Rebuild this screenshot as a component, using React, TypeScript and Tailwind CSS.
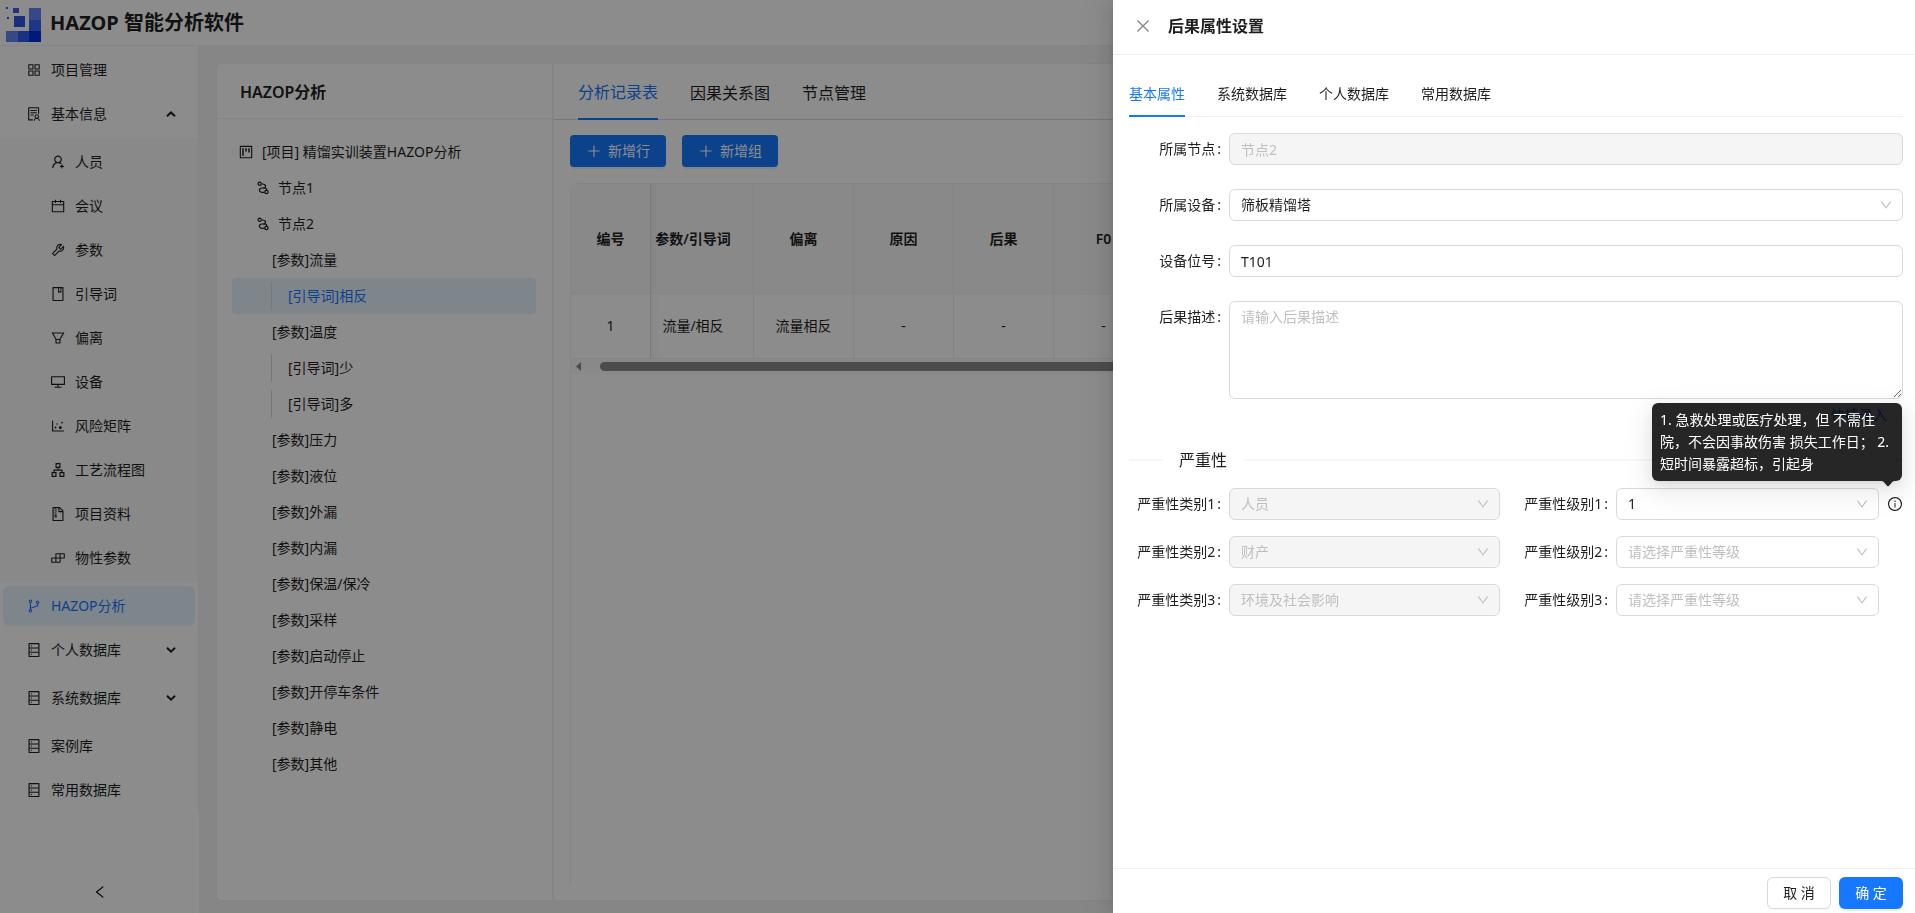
import { useId } from "react";
import type { ReactNode } from "react";
import type { IconType } from "react-icons";
import {
  AiOutlineApartment,
  AiOutlineAppstore,
  AiOutlineBook,
  AiOutlineBranches,
  AiOutlineBuild,
  AiOutlineCalendar,
  AiOutlineClose,
  AiOutlineDatabase,
  AiOutlineDesktop,
  AiOutlineDotChart,
  AiOutlineDown,
  AiOutlineFileZip,
  AiOutlineFilter,
  AiOutlineInfoCircle,
  AiOutlineLeft,
  AiOutlinePlus,
  AiOutlineProject,
  AiOutlineSolution,
  AiOutlineTool,
  AiOutlineUserAdd,
} from "react-icons/ai";

function Logo() {
  return (
    <svg width="36" height="36" viewBox="0 0 36 36" aria-hidden="true">
      <rect x="0" y="0" width="2" height="2" fill="#3b5bdb" />
      <rect x="7" y="1" width="6" height="5" fill="#3a5be0" />
      <rect x="1" y="10" width="2" height="2" fill="#3b5bdb" />
      <rect x="8" y="9" width="11" height="11" fill="#2f55e6" />
      <rect x="23" y="1" width="12" height="12" fill="#6684f5" />
      <rect x="23" y="13" width="12" height="11" fill="#3a62f5" />
      <rect x="0" y="24" width="12" height="11" fill="#6684f5" />
      <rect x="12" y="24" width="11" height="11" fill="#2f5af0" />
      <rect x="23" y="24" width="12" height="11" fill="#0030d8" />
    </svg>
  );
}

function NodeIcon() {
  return (
    <svg width="13" height="14" viewBox="0 0 13 14" fill="none" stroke="currentColor" strokeWidth="1.2" aria-hidden="true">
      <circle cx="2.6" cy="2.800" r="1.6" />
      <path d="M4.300 3h1.300c1.700 0 2.900.9 2.900 2.200S7.500 7 6.200 7H4.600a2.100 2.100 0 0 0 0 4.300h3" />
      <path d="M6.200 7h1.600c1.300 0 2 .9 2 2.200" />
      <circle cx="9.400" cy="11" r="1.700" />
    </svg>
  );
}

function Arrow({ up = false }: { up?: boolean }) {
  return (
    <svg width="10" height="6" viewBox="0 0 10 6" fill="none" stroke="currentColor" strokeWidth="2" aria-hidden="true">
      <path d={up ? "M1 5.2 5 1.4 9 5.2" : "M1 .8 5 4.6 9 .8"} />
    </svg>
  );
}

type MenuRowProps = {
  icon: IconType;
  label: string;
  sub?: boolean;
  active?: boolean;
  arrow?: "up" | "down";
  space?: string;
};

function MenuRow({ icon: Icon, label, sub, active, arrow, space = "pb-1" }: MenuRowProps) {
  return (
    <li className={space}>
      <button
        type="button"
        className={`mx-[3px] flex h-10 w-[calc(100%-6px)] items-center gap-[9px] rounded-md pr-[19px] text-left ${
          sub ? "pl-[47px]" : "pl-[23px]"
        } ${active ? "bg-[#e6f4ff] text-[#1677ff]" : ""}`}
      >
        <Icon size={16} />
        <span className="flex-1">{label}</span>
        {arrow && <Arrow up={arrow === "up"} />}
      </button>
    </li>
  );
}

const basicItems: { icon: IconType; label: string }[] = [
  { icon: AiOutlineUserAdd, label: "人员" },
  { icon: AiOutlineCalendar, label: "会议" },
  { icon: AiOutlineTool, label: "参数" },
  { icon: AiOutlineBook, label: "引导词" },
  { icon: AiOutlineFilter, label: "偏离" },
  { icon: AiOutlineDesktop, label: "设备" },
  { icon: AiOutlineDotChart, label: "风险矩阵" },
  { icon: AiOutlineApartment, label: "工艺流程图" },
  { icon: AiOutlineFileZip, label: "项目资料" },
  { icon: AiOutlineBuild, label: "物性参数" },
];

function Sidebar() {
  return (
    <aside className="flex w-[199px] shrink-0 flex-col bg-white">
      <nav className="border-r border-[#f0f0f0]">
        <ul className="pt-1">
          <MenuRow icon={AiOutlineAppstore} label="项目管理" />
          <MenuRow icon={AiOutlineSolution} label="基本信息" arrow="up" />
          <li className="mb-1 bg-[#fafafa] pt-1">
            <ul>
              {basicItems.map((item) => (
                <MenuRow key={item.label} icon={item.icon} label={item.label} sub />
              ))}
            </ul>
          </li>
          <MenuRow icon={AiOutlineBranches} label="HAZOP分析" active />
          <MenuRow icon={AiOutlineDatabase} label="个人数据库" arrow="down" space="pb-2" />
          <MenuRow icon={AiOutlineDatabase} label="系统数据库" arrow="down" space="pb-2" />
          <MenuRow icon={AiOutlineDatabase} label="案例库" />
          <MenuRow icon={AiOutlineDatabase} label="常用数据库" />
        </ul>
      </nav>
      <button type="button" aria-label="收起菜单" className="mt-auto flex h-[42px] items-center justify-center">
        <AiOutlineLeft size={16} />
      </button>
    </aside>
  );
}

type TreeRow = { kind: "project" | "node" | "param" | "word"; label: string; active?: boolean };

const treeRows: TreeRow[] = [
  { kind: "project", label: "[项目] 精馏实训装置HAZOP分析" },
  { kind: "node", label: "节点1" },
  { kind: "node", label: "节点2" },
  { kind: "param", label: "[参数]流量" },
  { kind: "word", label: "[引导词]相反", active: true },
  { kind: "param", label: "[参数]温度" },
  { kind: "word", label: "[引导词]少" },
  { kind: "word", label: "[引导词]多" },
  { kind: "param", label: "[参数]压力" },
  { kind: "param", label: "[参数]液位" },
  { kind: "param", label: "[参数]外漏" },
  { kind: "param", label: "[参数]内漏" },
  { kind: "param", label: "[参数]保温/保冷" },
  { kind: "param", label: "[参数]采样" },
  { kind: "param", label: "[参数]启动停止" },
  { kind: "param", label: "[参数]开停车条件" },
  { kind: "param", label: "[参数]静电" },
  { kind: "param", label: "[参数]其他" },
];

const indent = { project: "pl-1.5", node: "pl-[25px]", param: "pl-10", word: "pl-[39px]" };

function TreePanel() {
  return (
    <section className="w-[337px] shrink-0 rounded-l-md border border-[#f0f0f0] bg-white">
      <h2 className="flex h-[55px] items-center border-b border-[#f0f0f0] px-[23px] pb-1.5 pt-2 text-base font-semibold">
        HAZOP分析
      </h2>
      <ul className="pl-[15px] pr-4 pt-[15px]">
        {treeRows.map((row) => (
          <li key={row.label}>
            <button
              type="button"
              className={`flex h-9 w-full items-center gap-2 rounded text-left ${indent[row.kind]} ${
                row.active ? "bg-[#e6f4ff] text-[#1677ff]" : ""
              }`}
            >
              {row.kind === "project" && <AiOutlineProject size={16} />}
              {row.kind === "node" && <NodeIcon />}
              {row.kind === "word" ? (
                <span className="flex h-7 items-center border-l border-[#d9d9d9] pl-4">{row.label}</span>
              ) : (
                <span>{row.label}</span>
              )}
            </button>
          </li>
        ))}
      </ul>
    </section>
  );
}

const columns = [
  { title: "编号", value: "1", width: "w-[81px]" },
  { title: "参数/引导词", value: "流量/相反", width: "w-[103px]" },
  { title: "偏离", value: "流量相反", width: "w-[100px]" },
  { title: "原因", value: "-", width: "w-[100px]" },
  { title: "后果", value: "-", width: "w-[100px]" },
  { title: "F0", value: "-", width: "w-[100px]" },
];

function cellStyle(index: number) {
  if (index === 0) return "border-l border-r-[#e0e0e0]";
  if (index === 1) return "pr-[18px] shadow-[inset_10px_0_8px_-8px_rgba(5,5,5,0.06)]";
  return "";
}

function RecordsPanel() {
  return (
    <section className="flex min-w-0 flex-1 flex-col rounded-r-md border border-[#f0f0f0] bg-white">
      <div role="tablist" className="flex h-14 shrink-0 gap-8 border-b border-[#d9d9d9] px-6 text-base">
        <button type="button" role="tab" aria-selected="true" className="-mb-px border-b-2 border-[#1677ff] pt-0.5 text-[#1677ff]">
          分析记录表
        </button>
        <button type="button" role="tab" aria-selected="false" className="pt-0.5">因果关系图</button>
        <button type="button" role="tab" aria-selected="false" className="pt-0.5">节点管理</button>
      </div>
      <div className="flex gap-4 px-4 pt-[15px]">
        {["新增行", "新增组"].map((label) => (
          <button
            key={label}
            type="button"
            className="flex h-8 items-center gap-1.5 rounded bg-[#1677ff] px-4 text-white shadow-[0_2px_0_rgba(5,145,255,0.1)]"
          >
            <AiOutlinePlus size={16} />
            {label}
          </button>
        ))}
      </div>
      <div className="mx-4 mb-4 mt-4 flex-1 overflow-hidden rounded-t-lg border-l border-[#f0f0f0]">
        <table className="-ml-px w-full table-fixed border-separate border-spacing-0 whitespace-nowrap border-t border-[#f0f0f0] text-center">
          <thead>
            <tr className="h-[110px] bg-[#fafafa]">
              {columns.map((c, i) => (
                <th key={c.title} scope="col" className={`${c.width} border-b border-r border-[#f0f0f0] font-semibold ${cellStyle(i)}`}>
                  {c.title}
                </th>
              ))}
              <td className="border-b border-[#f0f0f0]" />
            </tr>
          </thead>
          <tbody>
            <tr className="h-[65px]">
              {columns.map((c, i) => (
                <td key={c.title} className={`border-b border-r border-[#f0f0f0] ${cellStyle(i)}`}>
                  {c.value}
                </td>
              ))}
              <td className="border-b border-[#f0f0f0]" />
            </tr>
          </tbody>
        </table>
        <div className="flex h-[15px] items-center bg-[#fafafa] pl-[5px]">
          <svg width="5" height="9" viewBox="0 0 5 9" aria-hidden="true">
            <path d="M5 0v9L0 4.5z" fill="#8b8b8b" />
          </svg>
          <div className="ml-[19px] mr-6 h-[9px] flex-1 rounded-full bg-[#8b8b8b]" />
        </div>
      </div>
    </section>
  );
}

const fieldBase = "w-full rounded-md border border-[#d9d9d9] px-[11px]";
const fieldOff = "bg-[#f5f5f5] text-[#bfbfbf] opacity-100";

function FieldLabel({ htmlFor, children }: { htmlFor: string; children: ReactNode }) {
  return (
    <label htmlFor={htmlFor} className="flex h-8 items-center justify-end pr-2">
      {children}
      <span className="ml-0.5">:</span>
    </label>
  );
}

function Dropdown({ id, value, tone = "" }: { id: string; value: string; tone?: string }) {
  return (
    <div className="relative">
      <select id={id} disabled={tone === fieldOff} defaultValue={value} className={`${fieldBase} h-8 appearance-none ${tone}`}>
        <option>{value}</option>
      </select>
      <AiOutlineDown size={14} className="pointer-events-none absolute right-2.5 top-[9px] text-[#bfbfbf]" />
    </div>
  );
}

const severities = [
  { category: "人员", level: "1", hint: true },
  { category: "财产", level: "请选择严重性等级", hint: false },
  { category: "环境及社会影响", level: "请选择严重性等级", hint: false },
];

function Drawer() {
  const id = useId();
  return (
    <div
      role="dialog"
      aria-label="后果属性设置"
      className="fixed inset-y-0 right-0 flex w-[802px] max-w-full flex-col bg-white shadow-[-6px_0_16px_0_rgba(0,0,0,0.08),-3px_0_6px_-4px_rgba(0,0,0,0.12),-9px_0_28px_8px_rgba(0,0,0,0.05)]"
    >
      <header className="flex h-[55px] shrink-0 items-center gap-4 border-b border-[#f0f0f0] px-[21px] pb-0.5">
        <button type="button" aria-label="关闭" className="text-[#8c8c8c]">
          <AiOutlineClose size={18} />
        </button>
        <h2 className="text-base font-semibold">后果属性设置</h2>
      </header>

      <div className="flex-1 pl-4 pr-3 pt-4">
        <div role="tablist" className="flex h-[46px] gap-8 border-b border-[#f0f0f0]">
          <button type="button" role="tab" aria-selected="true" className="-mb-px border-b-2 border-[#1677ff] pt-px text-[#1677ff]">
            基本属性
          </button>
          <button type="button" role="tab" aria-selected="false">系统数据库</button>
          <button type="button" role="tab" aria-selected="false">个人数据库</button>
          <button type="button" role="tab" aria-selected="false">常用数据库</button>
        </div>

        <form>
          <div className="mt-4 grid grid-cols-[100px_1fr] gap-y-6">
            <FieldLabel htmlFor={`${id}-node`}>所属节点</FieldLabel>
            <input id={`${id}-node`} disabled defaultValue="节点2" className={`${fieldBase} ${fieldOff} h-8`} />
            <FieldLabel htmlFor={`${id}-device`}>所属设备</FieldLabel>
            <Dropdown id={`${id}-device`} value="筛板精馏塔" />
            <FieldLabel htmlFor={`${id}-tag`}>设备位号</FieldLabel>
            <input id={`${id}-tag`} defaultValue="T101" className={`${fieldBase} h-8`} />
            <FieldLabel htmlFor={`${id}-desc`}>后果描述</FieldLabel>
            <textarea
              id={`${id}-desc`}
              rows={4}
              placeholder="请输入后果描述"
              className={`${fieldBase} block resize-y py-1 placeholder:text-[#bfbfbf]`}
            />
          </div>
          <div className="flex justify-end">
            <button type="button" className="h-8 px-4 text-[#1677ff]">快捷录入</button>
          </div>

          <div className="mt-[17px] flex h-6 items-center text-base">
            <span className="h-0.5 w-[34px] bg-[#f7f7f7]" />
            <h3 className="px-4">严重性</h3>
            <span className="h-0.5 flex-1 bg-[#f7f7f7]" />
          </div>

          <div className="mt-4 flex flex-col gap-4">
            {severities.map((s, i) => (
              <div key={s.category} className="grid grid-cols-[100px_271fr_116px_263fr_24px]">
                <FieldLabel htmlFor={`${id}-cat-${i}`}>严重性类别{i + 1}</FieldLabel>
                <Dropdown id={`${id}-cat-${i}`} value={s.category} tone={fieldOff} />
                <FieldLabel htmlFor={`${id}-lvl-${i}`}>严重性级别{i + 1}</FieldLabel>
                <Dropdown id={`${id}-lvl-${i}`} value={s.level} tone={s.hint ? "" : "text-[#bfbfbf]"} />
                {s.hint && (
                  <div className="relative flex items-center justify-end">
                    <AiOutlineInfoCircle size={16} />
                    <div
                      role="tooltip"
                      className="absolute bottom-full right-px mb-[7px] w-[250px] rounded-md bg-black/85 px-2 py-1.5 text-white shadow-[0_6px_16px_0_rgba(0,0,0,0.08),0_3px_6px_-4px_rgba(0,0,0,0.12),0_9px_28px_8px_rgba(0,0,0,0.05)]"
                    >
                      1. 急救处理或医疗处理，但 不需住院，不会因事故伤害 损失工作日； 2. 短时间暴露超标，引起身
                      <svg width="14" height="6" viewBox="0 0 14 6" className="absolute right-[7px] top-full text-black/85" aria-hidden="true">
                        <path d="M0 0h14c-1.5 0-2.4.6-3.200 1.400L8 4.800q-1 1-2 0L3.200 1.400C2.400.6 1.500 0 0 0z" fill="currentColor" />
                      </svg>
                    </div>
                  </div>
                )}
              </div>
            ))}
          </div>
        </form>
      </div>

      <footer className="flex h-[45px] shrink-0 items-start justify-end gap-2 border-t border-[#f0f0f0] px-3 pt-2">
        <button type="button" className="h-8 w-16 rounded-md border border-[#d9d9d9] bg-white shadow-[0_2px_0_rgba(0,0,0,0.02)]">
          取 消
        </button>
        <button type="button" className="h-8 w-16 rounded-md bg-[#1677ff] text-white shadow-[0_2px_0_rgba(5,145,255,0.1)]">
          确 定
        </button>
      </footer>
    </div>
  );
}

export default function App() {
  return (
    <div className="flex h-screen flex-col overflow-hidden bg-[#f5f5f5] font-['Noto_Sans','Noto_Sans_CJK_SC',sans-serif] text-sm leading-[22px] text-[#1f1f1f]">
      <header className="flex h-[46px] shrink-0 items-center gap-2 border-b border-[#f0f0f0] bg-white pl-1.5">
        <div className="mt-1">
          <Logo />
        </div>
        <h1 className="text-xl font-bold">HAZOP 智能分析软件</h1>
      </header>
      <div className="flex min-h-0 flex-1">
        <Sidebar />
        <main className="flex min-w-0 flex-1 pb-3 pl-[17px] pr-4 pt-[17px]">
          <TreePanel />
          <RecordsPanel />
        </main>
      </div>
      <div className="fixed inset-0 bg-black/45" />
      <Drawer />
    </div>
  );
}
